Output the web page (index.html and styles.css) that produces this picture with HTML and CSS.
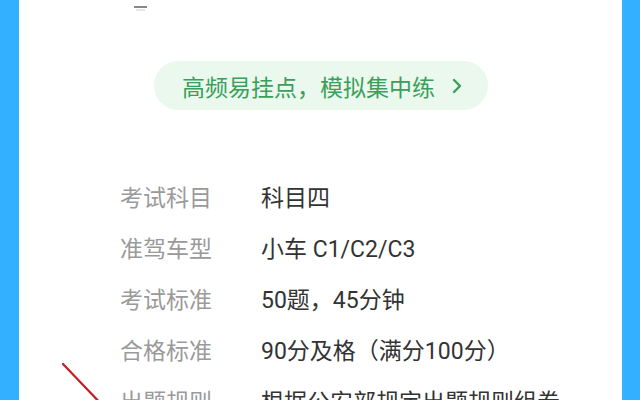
FILE: index.html
```html
<!DOCTYPE html>
<html lang="zh">
<head>
<meta charset="utf-8">
<link rel="stylesheet" href="styles.css">
</head>
<body>
<div class="frame">
  <div class="bar"></div>
  <main class="panel">
    <div class="top">
      <svg class="logo" width="16" height="12" viewBox="0 0 16 12"><path d="M1 7 H14" stroke="#888" stroke-width="2"/><path d="M3 10 H12" stroke="#ccc" stroke-width="1"/></svg>
      <span class="top-text">扫码下载驾考宝典练更多题</span>
    </div>
    <div class="pill-wrap">
      <div class="pill">高频易挂点，模拟集中练<svg class="chev" width="12" height="16" viewBox="0 0 12 16"><path d="M3 2 L9 8 L3 14" fill="none" stroke="#3a9f5a" stroke-width="2.4" stroke-linecap="round" stroke-linejoin="round"/></svg></div>
    </div>
    <div class="rows">
      <div class="row"><span class="label">考试科目</span><span class="value">科目四</span></div>
      <div class="row"><span class="label">准驾车型</span><span class="value">小车 C1/C2/C3</span></div>
      <div class="row"><span class="label">考试标准</span><span class="value">50题，45分钟</span></div>
      <div class="row"><span class="label">合格标准</span><span class="value">90分及格（满分100分）</span></div>
      <div class="row"><span class="label">出题规则</span><span class="value">根据公安部规定出题规则组卷</span></div>
    </div>
    <svg class="arrow" width="60" height="50" viewBox="0 0 60 50"><path d="M2 2 L45 47" stroke="#c41c24" stroke-width="2.2" stroke-linecap="round"/></svg>
  </main>
  <div class="bar right"></div>
</div>
</body>
</html>
```
FILE: styles.css
```css
html, body {
  margin: 0;
  padding: 0;
  background: #33b0ff;
  overflow: hidden;
}
.frame {
  display: flex;
  width: 640px;
  height: 400px;
  overflow: hidden;
}
.bar {
  width: 19px;
  flex: none;
  background: #33b0ff;
}
.bar.right {
  width: 18px;
}
.panel {
  flex: 1;
  background: #fff;
  position: relative;
  overflow: hidden;
  font-family: Roboto, "Noto Sans CJK SC", sans-serif;
}
.top {
  display: flex;
  align-items: flex-end;
  height: 24px;
  margin-top: -26px;
  padding-left: 114px;
  gap: 55px;
}
.logo {
  margin-bottom: -14px;
}
.top-text {
  font-family: "Noto Sans CJK SC", sans-serif;
  font-size: 22px;
  line-height: 22px;
  color: #777;
}
.pill-wrap {
  display: flex;
  justify-content: center;
  margin-top: 63px;
}
.pill {
  width: 334px;
  height: 49px;
  box-sizing: border-box;
  border-radius: 25px;
  background: #eaf8ee;
  color: #3a9f5a;
  font-family: "Noto Sans CJK SC", sans-serif;
  font-size: 23px;
  display: flex;
  align-items: center;
  justify-content: center;
  gap: 16px;
  padding-left: 4px;
}
.chev {
  flex: none;
}
.rows {
  margin-top: 60px;
  padding-left: 101px;
}
.row {
  display: flex;
  height: 51px;
  align-items: center;
  font-size: 23px;
  white-space: nowrap;
}
.label {
  width: 141px;
  flex: none;
  color: #9a9a9a;
  font-family: "Noto Sans CJK SC", sans-serif;
}
.value {
  color: #333;
}
.arrow {
  position: absolute;
  left: 42px;
  top: 362px;
}
```
